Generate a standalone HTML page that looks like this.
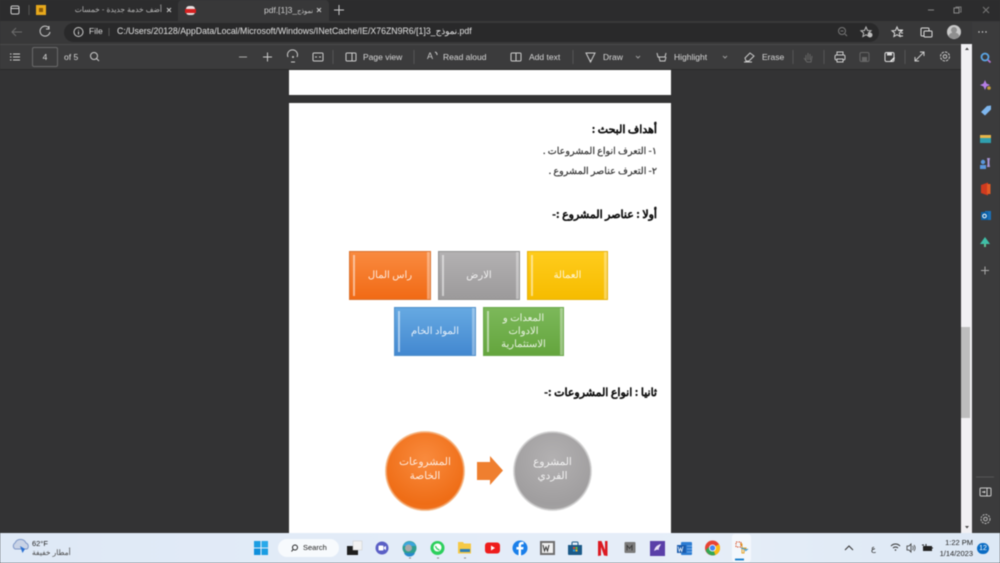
<!DOCTYPE html>
<html lang="en"><head><meta charset="utf-8"><title>PDF</title>
<style>
*{box-sizing:border-box;margin:0;padding:0}
html,body{width:1000px;height:563px;overflow:hidden;background:#333}
body{font-family:"Liberation Sans","Noto Sans CJK SC",sans-serif;position:relative}
#w{position:absolute;left:0;top:0;width:1000px;height:563px;filter:blur(.45px);overflow:hidden}
.a{position:absolute}
.t{position:absolute;white-space:nowrap;line-height:1}
.tb{color:#d8d8d8;font-size:8.5px}
.ar{direction:rtl;font-family:"Liberation Sans","Noto Sans CJK SC",sans-serif}
.box{position:absolute;color:rgba(255,255,255,.85);display:flex;align-items:center;justify-content:center;text-align:center;direction:rtl;font-size:10px;line-height:13px;font-family:"Liberation Serif",serif;padding-bottom:1px}
.box:before{content:"";position:absolute;left:3px;top:3px;bottom:3px;width:2px;background:rgba(255,255,255,.5)}
.box:after{content:"";position:absolute;right:0;top:0;bottom:0;width:3px;background:rgba(255,255,255,.35)}
.c{position:absolute;border-radius:50%;color:rgba(255,255,255,.85);display:flex;align-items:center;justify-content:center;text-align:center;direction:rtl;font-size:10.5px;line-height:14px;font-family:"Liberation Serif",serif;padding-bottom:2px}
.h{position:absolute;direction:rtl;color:#111;font-weight:bold;white-space:nowrap;line-height:1;font-size:11px;font-family:"Noto Sans CJK SC",sans-serif;-webkit-text-stroke:.15px #111}
.i{position:absolute;direction:rtl;color:#333;white-space:nowrap;line-height:1;font-size:9.6px;font-family:"Noto Sans CJK SC",sans-serif;-webkit-text-stroke:.2px #333}
svg{position:absolute;left:0;top:0}
</style></head><body><div id="w">
<div class="a" style="left:0;top:0;width:1000px;height:22px;background:#2c2c2d"></div>
<div class="a" style="left:178px;top:0;width:151px;height:22px;background:#383839;border-radius:4px 4px 0 0"></div>
<div class="a" style="left:0;top:21px;width:1000px;height:24px;background:#383839"></div>
<div class="a" style="left:64px;top:23px;width:815px;height:19px;background:#29292a;border-radius:10px"></div>
<div class="a" style="left:0;top:44px;width:1000px;height:26px;background:#3b3b3c;border-top:1px solid #4a4a4a;border-bottom:1px solid #2a2a2a"></div>
<div class="a" style="left:0;top:70px;width:961px;height:463px;background:#333334"></div>
<div class="a" style="left:961px;top:44px;width:11px;height:489px;background:#f1f0f3"></div>
<div class="a" style="left:961px;top:327px;width:9px;height:91px;background:#bdbdbd"></div>
<div class="a" style="left:972px;top:22px;width:28px;height:511px;background:#3b3b3c"></div>
<div class="a" style="left:289px;top:70px;width:382px;height:25px;background:#fff"></div>
<div class="a" style="left:289px;top:103px;width:382px;height:430px;background:#fff"></div>

<div class="t ar" style="right:838px;top:6px;font-size:7.5px;color:#bbb">أضف خدمة جديدة - خمسات</div>
<div class="t" style="left:264px;top:6px;font-size:8.5px;color:#ccc">pdf.[1]3_<span style="font-size:6.5px">نموذج</span></div>
<div class="t" style="left:89px;top:27px;font-size:8.5px;color:#ddd">File</div>
<div class="t" style="left:117px;top:27px;font-size:8.75px;color:#e2e2e2">C:/Users/20128/AppData/Local/Microsoft/Windows/INetCache/IE/X76ZN9R6/[1]3_نموذج.pdf</div>
<div class="a" style="left:32px;top:47px;width:26px;height:20px;border:1px solid #6a6a6a;border-radius:2px;color:#ddd;font-size:8.5px;text-align:center;line-height:18px">4</div>
<div class="t tb" style="left:64px;top:53px">of 5</div>
<div class="t tb" style="left:363px;top:53px">Page view</div>
<div class="t tb" style="left:443px;top:53px">Read aloud</div>
<div class="t tb" style="left:529px;top:53px">Add text</div>
<div class="t tb" style="left:603px;top:53px">Draw</div>
<div class="t tb" style="left:674px;top:53px">Highlight</div>
<div class="t tb" style="left:762px;top:53px">Erase</div>
<div class="t" style="left:427px;top:52px;font-size:9px;color:#ccc">A</div>

<div class="h" style="right:343px;top:124px">أهداف البحث :</div>
<div class="i" style="right:343px;top:146px">١- التعرف انواع المشروعات .</div>
<div class="i" style="right:343px;top:166px">٢- التعرف عناصر المشروع .</div>
<div class="h" style="right:343px;top:209px">أولا : عناصر المشروع :-</div>
<div class="h" style="right:343px;top:387px">ثانيا : انواع المشروعات :-</div>

<div class="box" style="left:349px;top:251px;width:82px;height:49px;background:linear-gradient(#f98a3f,#f16a15);border:1px solid #d9722f">راس المال</div>
<div class="box" style="left:438px;top:251px;width:82px;height:49px;background:linear-gradient(#b3b1b2,#9c9a9b);border:1px solid #8f8f8f">الارض</div>
<div class="box" style="left:527px;top:251px;width:81px;height:49px;background:linear-gradient(#ffcc1c,#f6bc00);border:1px solid #e6b20a">العمالة</div>
<div class="box" style="left:394px;top:307px;width:82px;height:49px;background:linear-gradient(#66a9e2,#4388d0);border:1px solid #4f8fcb">المواد الخام</div>
<div class="box" style="left:483px;top:307px;width:81px;height:49px;background:linear-gradient(#7cb85a,#64a53d);border:1px solid #6aa84a;padding:0 8px">المعدات و الادوات الاستثمارية</div>

<div class="c" style="left:385px;top:431px;width:80px;height:80px;background:radial-gradient(circle at 50% 35%,#f98b3e,#ef6d16 70%,#ee7a2a);border:1px solid #f5c79d;box-shadow:inset 0 0 0 1px rgba(255,255,255,.3)">المشروعات<br>الخاصة</div>
<div class="c" style="left:513px;top:431px;width:79px;height:80px;background:radial-gradient(circle at 50% 35%,#b3b1b2,#a09e9f 70%,#aaa);border:1px solid #ddd;box-shadow:inset 0 0 0 1px rgba(255,255,255,.35)">المشروع<br>الفردي</div>

<div class="a" style="left:0;top:533px;width:1000px;height:30px;background:linear-gradient(90deg,#dfe9f6,#e3ecf8 40%,#e6eef8 70%,#dde8f5)"></div>
<div class="t" style="left:32px;top:540px;font-size:7.5px;color:#222">62°F</div>
<div class="t ar" style="left:32px;top:549px;font-size:7.5px;color:#444">أمطار خفيفة</div>
<div class="a" style="left:278px;top:539px;width:61px;height:18px;background:#f7fafd;border-radius:9px"></div>
<div class="t" style="left:303px;top:544px;font-size:7.5px;color:#222">Search</div>
<div class="t" style="right:27px;top:539px;font-size:7.5px;color:#222">1:22 PM</div>
<div class="t" style="right:27px;top:550px;font-size:7.5px;color:#222">1/14/2023</div>
<div class="a" style="left:977px;top:543px;width:12px;height:11px;border-radius:6px;background:#0a6cc4;color:#fff;font-size:7px;line-height:11px;text-align:center">12</div>
<div class="t" style="left:871px;top:545px;font-size:8px;color:#222">ع</div>
<div class="a" style="left:732px;top:534px;width:19px;height:28px;background:#f3f7fc;border-radius:3px"></div>

<svg width="1000" height="563" viewBox="0 0 1000 563" fill="none">
<!-- tabs -->
<rect x="11" y="6" width="8" height="8" rx="1.5" stroke="#ccc" stroke-width="1"/><path d="M11 8.5h8" stroke="#ccc"/>
<path d="M29 5v10" stroke="#555"/>
<rect x="36" y="5" width="10" height="10" fill="#e8a91c"/><rect x="39" y="8" width="4" height="4" fill="#8a5b08"/>
<path d="M167 8l4 4m0-4l-4 4M317 8l4 4m0-4l-4 4" stroke="#ccc"/>
<rect x="186" y="6" width="9" height="9" rx="3" fill="#e9e0e0"/><rect x="185" y="9" width="11" height="4" fill="#d42020"/>
<path d="M339 5v10M334 10h10" stroke="#ccc"/>
<path d="M928 10h6" stroke="#888"/><rect x="954" y="8" width="5" height="5" stroke="#888"/><path d="M956 8v-1h5v5h-1" stroke="#777"/><path d="M983 7l6 6m0-6l-6 6" stroke="#777"/>
<!-- nav -->
<path d="M22 32H12m4-4l-4 4 4 4" stroke="#6d6d6d"/>
<path d="M49 28a5 5 0 1 0 1 4M49 26v3h-3" stroke="#ccc"/>
<circle cx="78.500" cy="32" r="4.500" stroke="#ccc"/><path d="M78.500 30v.6M78.500 31.500v3" stroke="#ccc"/>
<path d="M109 28v8" stroke="#555"/>
<circle cx="842" cy="31" r="3.500" stroke="#777"/><path d="M845 34l2 2M840.500 31h3" stroke="#777"/>
<path d="M866 27l1.500 3.500 3.500.3-2.700 2.300.8 3.400-3.100-1.800-3.100 1.800.8-3.400-2.700-2.300 3.500-.3z" stroke="#bbb"/><circle cx="870" cy="35" r="2.500" fill="#bbb"/>
<path d="M897 27l1.500 3.500 3.500.3-2.700 2.300.8 3.400-3.100-1.800-3.100 1.800.8-3.400-2.700-2.300 3.500-.3z" stroke="#ddd"/><path d="M899 30h4M901 33h2M900 36h3" stroke="#ddd"/>
<rect x="921" y="28" width="8" height="8" rx="1" stroke="#ddd"/><rect x="924" y="31" width="8" height="6" rx="1" fill="#383839" stroke="#ddd"/>
<circle cx="954" cy="32" r="7" fill="#c9c9c9"/><circle cx="954" cy="30" r="3" fill="#8f8f8f"/><path d="M948.500 36a6 6 0 0 1 11 0l-2.500 2.500h-6z" fill="#8f8f8f"/>
<circle cx="979" cy="32" r=".7" fill="#ddd"/><circle cx="982.500" cy="32" r=".7" fill="#ddd"/><circle cx="986" cy="32" r=".7" fill="#ddd"/>
<!-- pdf toolbar -->
<path d="M13 54h7M13 57h7M13 60h7" stroke="#ccc"/><path d="M10 54h1.500M10 57h1.500M10 60h1.500" stroke="#ccc"/>
<circle cx="94" cy="56" r="3.500" stroke="#ccc"/><path d="M96.500 58.500l2.500 2.500" stroke="#ccc"/>
<path d="M239 57h8" stroke="#aaa"/><path d="M263 57h9M267.500 52.500v9" stroke="#ccc"/>
<path d="M288 57a5 5 0 1 1 9 0" stroke="#ccc"/><circle cx="293" cy="57" r="1" fill="#ccc"/><path d="M291 62h4" stroke="#ccc"/>
<rect x="313" y="53" width="10" height="8" rx="1" stroke="#ccc"/><path d="M315 57h2M319 57h2" stroke="#ccc"/>
<path d="M333 50v14M414 50v14M573 50v14M793 50v14M824 50v14M905 50v14" stroke="#555"/>
<rect x="346" y="53" width="10" height="8" rx="1" stroke="#ccc"/><path d="M352 53v8" stroke="#ccc"/>
<path d="M435 52a3 3 0 0 1 2 3" stroke="#ccc"/>
<rect x="511" y="53" width="10" height="8" rx="1" stroke="#ccc"/><path d="M516 53v8M514.500 53h3" stroke="#ccc"/>
<path d="M586 53h9l-4.500 9z" stroke="#ccc"/><circle cx="590.500" cy="61" r="1" fill="#ccc"/>
<path d="M636 56l2 2 2-2M723 56l2 2 2-2" stroke="#999"/>
<path d="M657 53l1 4h7l1-4M659 57l1 4h5l1-4" stroke="#ccc"/>
<path d="M745 58l5-5 4 3-5 5h-3z" stroke="#ccc"/><path d="M744 62h8" stroke="#ccc"/>
<path d="M806 60v-5M808 60v-7M810 60v-6M804 58l3 4h4l1-6" stroke="#666"/>
<rect x="835" y="55" width="10" height="5" rx="1.500" stroke="#ccc"/><rect x="837" y="52" width="6" height="3" stroke="#ccc"/><rect x="837" y="59" width="6" height="3" fill="#3b3b3c" stroke="#ccc"/>
<rect x="860" y="52.500" width="9" height="9" rx="1.500" stroke="#666"/><rect x="862" y="57" width="5" height="4.500" fill="#666"/>
<rect x="885" y="52.500" width="9" height="9" rx="1.500" stroke="#ddd"/><rect x="887" y="53" width="5" height="2.500" fill="#ddd"/><path d="M890 61l4-4 1 1-4 4z" fill="#eee"/>
<path d="M915 61l9-9M920 52h4v4M915 57v4h4" stroke="#ccc"/>
<circle cx="945" cy="56.500" r="1.800" stroke="#ccc"/><circle cx="945" cy="56.500" r="4.500" stroke="#ccc" stroke-dasharray="2.500 1"/>
<path d="M965 50l2-2.500 2 2.500zM965 526l2 2.500 2-2.500z" fill="#444"/>
<!-- sidebar -->
<circle cx="985" cy="57" r="3.500" stroke="#5aa6e6" stroke-width="1.800"/><path d="M988 60l2.500 2.500" stroke="#b077d0" stroke-width="1.800"/>
<path d="M985 80l1.500 3.500 3.500 1.500-3.500 1.500-1.500 3.500-1.500-3.500-3.500-1.500 3.500-1.500z" fill="#b57ee6"/><circle cx="989" cy="88" r="1.800" fill="#c09a3a"/>
<path d="M981 112l6-6 4-.5v4l-6 6z" fill="#7fb7ef"/>
<rect x="980" y="135" width="11" height="8" fill="#2f9fae"/><path d="M980 135h11v3h-11z" fill="#e7b54a"/>
<circle cx="983" cy="162" r="2.200" fill="#5b97de"/><path d="M980 169v-4h6v4z" fill="#5b97de"/><path d="M987 158h3l-.5 3v3l.5 3h-3l.5-3v-3z" fill="#a793d5"/>
<path d="M981 185l7-2.500v13l-7-2.500z" fill="#cf3a1f"/><rect x="987" y="184" width="3.500" height="10" fill="#e25a24"/>
<rect x="985" y="211" width="6" height="9" fill="#1a70b8"/><rect x="981" y="212" width="7" height="8" fill="#0a5fa6"/><circle cx="984.500" cy="216" r="1.800" stroke="#fff"/>
<path d="M985 237l5 7h-10z" fill="#3fbfa8"/><rect x="984" y="244" width="2" height="3" fill="#60c090"/>
<path d="M981 270.500h8M985 266.500v8" stroke="#aaa"/>
<path d="M976 477h18" stroke="#555"/>
<rect x="980" y="488" width="11" height="8" rx="1" stroke="#ccc"/><path d="M987 488v8M982 492h3m-1-1l1 1-1 1" stroke="#ccc"/>
<circle cx="985.500" cy="519" r="1.800" stroke="#bbb"/><circle cx="985.500" cy="519" r="4.500" stroke="#bbb" stroke-dasharray="2 1"/>
<!-- arrow -->
<path d="M477 462h13v-6l13 14.500-13 14.500v-5h-13z" fill="#ef7f2f"/>
<!-- taskbar -->
<path d="M15 549a3.500 3.500 0 0 1 0-6 6 6 0 0 1 11 0 3.500 3.500 0 0 1 1 6z" fill="#c9d3e6" stroke="#7f98c8"/><path d="M20 546l2.500 7 2.500-4z" fill="#2a6fd0"/>
<rect x="254" y="541" width="6.500" height="6.500" fill="#1b9de2"/><rect x="261.500" y="541" width="6.500" height="6.500" fill="#29a9ea"/><rect x="254" y="548.500" width="6.500" height="6.500" fill="#0f8fdc"/><rect x="261.500" y="548.500" width="6.500" height="6.500" fill="#1b9de2"/>
<circle cx="295" cy="547.500" r="2.500" stroke="#222"/><path d="M293 549.500l-1.500 2" stroke="#222"/>
<rect x="347" y="546" width="11" height="9" fill="#1e1e1e"/><rect x="353" y="541" width="9" height="9" fill="#f2f2f2" stroke="#c9c9c9" stroke-width=".5"/>
<circle cx="382" cy="548" r="6.500" fill="#5a5fc5"/><rect x="378.500" y="545.500" width="5" height="5" rx="1" fill="#fff"/><path d="M384 547l2-1v4l-2-1z" fill="#fff"/>
<circle cx="409.500" cy="548" r="7" fill="#2f9e8f"/><path d="M403 546a7 7 0 0 1 13 0z" fill="#3ba6dd"/><circle cx="408.500" cy="548" r="3.500" fill="#a8a8a8"/><path d="M404 553a6 6 0 0 0 11 0z" fill="#268acb"/>
<circle cx="437.500" cy="548" r="7" fill="#2ccf5c"/><circle cx="437.500" cy="547.500" r="4" fill="#fff"/><path d="M435.500 546c.5 2 2 3.500 4 4" stroke="#2ccf5c" stroke-width="1.300"/>
<path d="M458 542h5l1 1.500h7v10h-13z" fill="#f6c945"/><rect x="460" y="549" width="10" height="3" fill="#2f7fb5"/>
<rect x="485" y="542.500" width="15" height="11" rx="3" fill="#ee1c1c"/><path d="M491 545.500l4 2.500-4 2.500z" fill="#fff"/>
<circle cx="520" cy="548" r="7.500" fill="#1a7fea"/><path d="M521 556v-6.500h2.200l.4-2.500H521v-1.500c0-.8.400-1.300 1.400-1.300h1.200v-2.200c-2.800-.4-5 .4-5 3.300V547h-2.200v2.500h2.200v6.500z" fill="#fff"/>
<rect x="540" y="541" width="15" height="14" fill="#6f6f6f"/><rect x="542" y="543" width="11" height="10" fill="#f1f1f1"/><path d="M543 545l1.500 6 1.500-4 1.500 4 1.500-6" stroke="#333"/>
<path d="M568 545h14v9a1 1 0 0 1-1 1h-12a1 1 0 0 1-1-1z" fill="#1b5a88"/><path d="M572 545v-2a1 1 0 0 1 1-1h4a1 1 0 0 1 1 1v2" stroke="#1b5a88"/><rect x="573" y="547" width="2" height="2" fill="#e64a2e"/><rect x="575.500" y="547" width="2" height="2" fill="#6fbf3a"/><rect x="573" y="549.500" width="2" height="2" fill="#2a9fe0"/><rect x="575.500" y="549.500" width="2" height="2" fill="#f3b72a"/>
<path d="M598 541h3.500l3.500 9v-9h2.500v15l-3.500-.5-3-8.500v8.500l-3 .5z" fill="#dc1a22"/>
<rect x="624.500" y="542" width="11" height="11" rx="1" fill="#7a7a7a"/><path d="M627 550.500v-5l2.500 3 2.500-3v5" stroke="#333" stroke-width=".8"/>
<rect x="650" y="541" width="15" height="15" fill="#5a3fa8"/><path d="M654 551c1-4 3-6 7-7-1 3-3 4-2 6-2-1-3 0-5 1z" fill="#e8e0f6"/>
<rect x="681" y="542" width="11" height="13" rx="1" fill="#2b7cd3"/><rect x="677" y="545" width="9" height="8" fill="#1a5cad"/><path d="M678 546.500l1.300 5 1.200-3.500 1.200 3.500 1.300-5" stroke="#fff" stroke-width=".7"/><path d="M687 546h5M687 549h5M687 552h5" stroke="#bcd6f2" stroke-width=".6"/>
<circle cx="712.500" cy="548" r="7.500" fill="#e84234"/><path d="M712.500 548l6.500-3.700a7.500 7.500 0 0 1-3.700 10.700z" fill="#f9bc15"/><path d="M712.500 548l2.800 7a7.500 7.500 0 0 1-9.500-4.500l0-.5 3-3z" fill="#33a853" /><circle cx="712.500" cy="548" r="3.500" fill="#fff"/><circle cx="712.500" cy="548" r="2.700" fill="#4285f4"/>
<path d="M736 542h5v5h-5z" stroke="#d9532a" stroke-dasharray="1.500 1"/><path d="M740 544h2v9h2v-4h2v-1h-4" stroke="#e3a32a"/><path d="M741 548l6 2M745 551l3-2" stroke="#3a9ad9"/>
<path d="M735 559.500h9" stroke="#0f78c8" stroke-width="1.800"/>
<path d="M409 558h2M437 558h2M464 558h2" stroke="#888"/>
<path d="M845 550l4-4 4 4" stroke="#333"/>
<path d="M891 546a6 6 0 0 1 9 0M893 548a3.500 3.500 0 0 1 5 0" stroke="#333"/><circle cx="895.500" cy="550" r=".8" fill="#333"/>
<path d="M907 546h2l2-2v8l-2-2h-2z" stroke="#333" stroke-width=".8"/><path d="M912.500 546c1 1 1 3 0 4M914 545c1.500 2 1.500 4 0 6" stroke="#333" stroke-width=".7"/>
<rect x="923" y="546" width="9" height="5" fill="#222"/><path d="M922 545l2 0M926 544l0 2M932 548h1" stroke="#222"/>
</svg>
</div></body></html>
